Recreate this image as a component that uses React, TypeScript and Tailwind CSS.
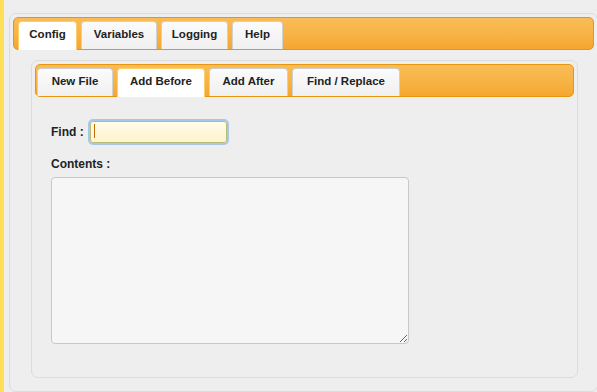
const outerTabs = [
    { label: 'Config', w: 'w-[59px]' },
    { label: 'Variables', w: 'w-[76px]' },
    { label: 'Logging', w: 'w-[67px]' },
    { label: 'Help', w: 'w-[51px]' },
];
const innerTabs = [
    { label: 'New File', w: 'w-[76px]' },
    { label: 'Add Before', w: 'w-[88px]' },
    { label: 'Add After', w: 'w-[79px]' },
    { label: 'Find / Replace', w: 'w-[108px]' },
];

const Tab = ({ label, w, active }: { label: string; w: string; active: boolean }) => (
    <div
        className={
            (active
                ? 'h-[29px] -mb-px border-[#fbcf6a] bg-white '
                : 'h-[28px] border-[#d0d0d0] bg-gradient-to-b from-[#fbfbfb] to-[#f0f0f0] ') +
            w +
            ' pt-[5px] leading-[14px] text-center rounded-t-[4px] border border-b-0 text-[#222] text-[11.5px] font-bold'
        }
    >
        {label}
    </div>
);

const TabBar = ({
    tabs,
    active,
    pad,
}: {
    tabs: { label: string; w: string }[];
    active: number;
    pad: string;
}) => (
    <div
        className={
            'h-[33px] rounded-[5px] border border-[#e8950f] bg-gradient-to-b from-[#f9bc57] via-[#f7b446] to-[#f5a630] pt-[4px] flex items-end gap-[4px] ' +
            pad
        }
    >
        {tabs.map((t, i) => (
            <Tab key={t.label} label={t.label} w={t.w} active={i === active} />
        ))}
    </div>
);

const App: React.FC = () => {
    return (
        <div
            className="w-[597px] h-[392px] bg-[#eeeeee] flex overflow-hidden"
            style={{ fontFamily: '"Liberation Sans", Arial, sans-serif' }}
        >
            <div className="w-[4px] h-full bg-[#ffe056] flex-none" />
            <div className="ml-[5px] mt-[13px] w-[589px] h-[379px] rounded-[7px] border border-[#dcdcdc] bg-[#eeeeee] p-[3px] flex-none">
                <TabBar tabs={outerTabs} active={0} pad="pl-[4px]" />

                <div className="mt-[10px] ml-[18px] mr-[16px] h-[318px] rounded-[7px] border border-[#dcdcdc] bg-[#eeeeee] p-[3px]">
                    <TabBar tabs={innerTabs} active={1} pad="pl-[1px]" />

                    <div className="pl-[16px] pt-[23px]">
                        <div className="flex items-center gap-[6px]">
                            <label className="text-[12px] font-bold text-[#222]">Find :</label>
                            <div className="relative">
                                <input
                                    type="text"
                                    className="w-[137px] h-[22px] rounded-[3px] border border-[#b9bd7a] bg-gradient-to-b from-[#fffbe6] to-[#fff4cf] outline-none shadow-[0_0_0_2px_#a8c8ea]"
                                />
                                <span className="absolute left-[4px] top-[4px] w-px h-[14px] bg-[#c06a00]" />
                            </div>
                        </div>

                        <div className="mt-[11px] text-[12px] font-bold text-[#222]">Contents :</div>

                        <textarea className="mt-[4px] block w-[358px] h-[167px] rounded-[4px] border border-[#c8c8c8] bg-[#f6f6f6] outline-none" />
                    </div>
                </div>
            </div>
        </div>
    );
};

export default App;
